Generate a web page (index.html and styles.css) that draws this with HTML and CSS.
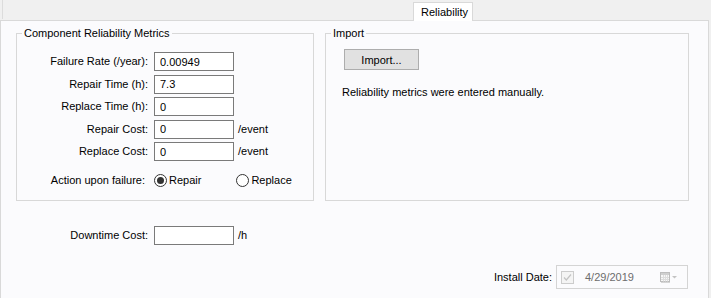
FILE: index.html
```html
<!DOCTYPE html>
<html>
<head>
<meta charset="utf-8">
<link rel="stylesheet" href="styles.css">
</head>
<body>
<div class="tabstrip">
  <div class="strip-edge"></div>
  <div class="tab">Reliability</div>
</div>
<div class="panel">
  <div class="groups">
    <fieldset class="group metrics">
      <legend>Component Reliability Metrics</legend>
      <div class="form">
        <label>Failure Rate (/year):</label><input type="text" value="0.00949" readonly><span></span>
        <label>Repair Time (h):</label><input type="text" value="7.3" readonly><span></span>
        <label>Replace Time (h):</label><input type="text" value="0" readonly><span></span>
        <label>Repair Cost:</label><input type="text" value="0" readonly><span class="unit">/event</span>
        <label>Replace Cost:</label><input type="text" value="0" readonly><span class="unit">/event</span>
      </div>
      <div class="radio-row">
        <label class="radio-label">Action upon failure:</label>
        <div class="radios">
          <span class="radio checked"></span><span class="radio-text">Repair</span>
          <span class="radio second"></span><span class="radio-text">Replace</span>
        </div>
      </div>
    </fieldset>
    <fieldset class="group import">
      <legend>Import</legend>
      <button class="btn">Import...</button>
      <p class="note">Reliability metrics were entered manually.</p>
    </fieldset>
  </div>
  <div class="form downtime">
    <label>Downtime Cost:</label><input type="text" value="" readonly><span class="unit">/h</span>
  </div>
  <div class="install">
    <label>Install Date:</label>
    <div class="datebox">
      <svg class="check" width="13" height="13" viewBox="0 0 13 13">
        <rect x="0.5" y="0.5" width="12" height="12" fill="#f4f4f4" stroke="#cccccc"/>
        <path d="M3 6.5 L5.3 9 L10 3.5" fill="none" stroke="#c3c3c3" stroke-width="1.2"/>
      </svg>
      <span class="datetext">4/29/2019</span>
      <svg class="cal" width="19" height="11" viewBox="0 0 19 11">
        <rect x="1" y="1" width="9" height="10" fill="#d6d6d6"/>
        <rect x="0.5" y="0.5" width="9" height="9" fill="#f7f7f7" stroke="#bdbdbd"/>
        <rect x="1" y="1" width="8" height="2" fill="#cfcfcf"/>
        <path d="M1 5.5 H9 M1 7.5 H9 M3.5 3 V9.5 M5.5 3 V9.5 M7.5 3 V9.5" stroke="#dddddd" stroke-width="1"/>
        <path d="M12 4 L17 4 L14.5 6.5 Z" fill="#c3c3c3"/>
      </svg>
    </div>
  </div>
</div>
</body>
</html>
```

FILE: styles.css
```css
html, body {
  margin: 0;
  padding: 0;
  background: #f0f0f0;
  font-family: "Liberation Sans", Arial, sans-serif;
  font-size: 11px;
  line-height: 13px;
  color: #000;
}

.tabstrip {
  height: 20px;
  display: flex;
  align-items: flex-end;
}

.strip-edge {
  align-self: flex-start;
  height: 19px;
  margin-left: 2px;
  border-left: 1px solid #dcdcdc;
}

.tab {
  position: relative;
  z-index: 1;
  margin-left: 410px;
  margin-bottom: -1px;
  box-sizing: border-box;
  width: 60px;
  height: 19px;
  padding: 3px 0 0 7px;
  background: #ffffff;
  border: 1px solid #d9d9d9;
  border-bottom: none;
}

.panel {
  width: 707px;
  height: 277px;
  background: #fbfbfd;
  border: 1px solid #d9d9d9;
  border-bottom: none;
}

.groups {
  display: flex;
  gap: 11px;
  padding-left: 15px;
  margin-top: 6px;
}

.group {
  margin: 0;
  box-sizing: border-box;
  border: 1px solid #d8d8d8;
  min-width: 0;
}

.group legend {
  margin-left: 5px;
  padding: 0 2px;
  line-height: 13px;
}

.metrics {
  width: 298px;
  padding: 12px 0 13px 0;
}

.import {
  width: 364px;
  padding: 9px 0 0 0;
}

.form {
  display: grid;
  grid-template-columns: 131px 80px auto;
  column-gap: 6px;
  grid-auto-rows: 19px;
  row-gap: 3.6px;
  align-items: center;
}

.form label {
  text-align: right;
}

.form input {
  box-sizing: border-box;
  width: 80px;
  height: 19px;
  margin: 0;
  padding: 0 0 0 5px;
  border: 1px solid #7a7a7a;
  background: #ffffff;
  font-family: inherit;
  font-size: 11px;
  color: #000;
  outline: none;
}

.unit {
  margin-left: -2px;
}

.radio-row {
  display: grid;
  grid-template-columns: 131px auto;
  column-gap: 6px;
  margin-top: 13px;
  align-items: center;
  height: 13px;
}

.radio-label {
  text-align: right;
  padding-right: 3px;
}

.radios {
  display: flex;
  align-items: center;
}

.radio {
  box-sizing: border-box;
  width: 13px;
  height: 13px;
  border: 1px solid #333333;
  border-radius: 50%;
  background: #ffffff;
  display: flex;
  align-items: center;
  justify-content: center;
}

.radio.checked::after {
  content: "";
  width: 7px;
  height: 7px;
  border-radius: 50%;
  background: #333333;
}

.radio-text {
  margin-left: 2px;
}

.radio.second {
  margin-left: 35px;
}

.btn {
  display: block;
  box-sizing: border-box;
  width: 75px;
  height: 21px;
  margin: 0 0 0 18px;
  padding: 0;
  background: #e1e1e1;
  border: 1px solid #adadad;
  font-family: inherit;
  font-size: 11px;
  color: #000;
}

.note {
  margin: 16px 0 0 16px;
}

.downtime {
  margin-top: 25px;
  padding-left: 16px;
}

.install {
  display: flex;
  justify-content: flex-end;
  align-items: center;
  gap: 4px;
  margin-top: 20px;
  padding-right: 20px;
}

.datebox {
  box-sizing: border-box;
  width: 132px;
  height: 24px;
  border: 1px solid #d4d4d4;
  background: #fbfbfd;
  display: flex;
  align-items: center;
  padding-left: 4px;
}

.check {
  display: block;
}

.datetext {
  margin-left: 11px;
  color: #6d6d6d;
  flex: 1;
}

.cal {
  display: block;
  margin-right: 8px;
}
```
